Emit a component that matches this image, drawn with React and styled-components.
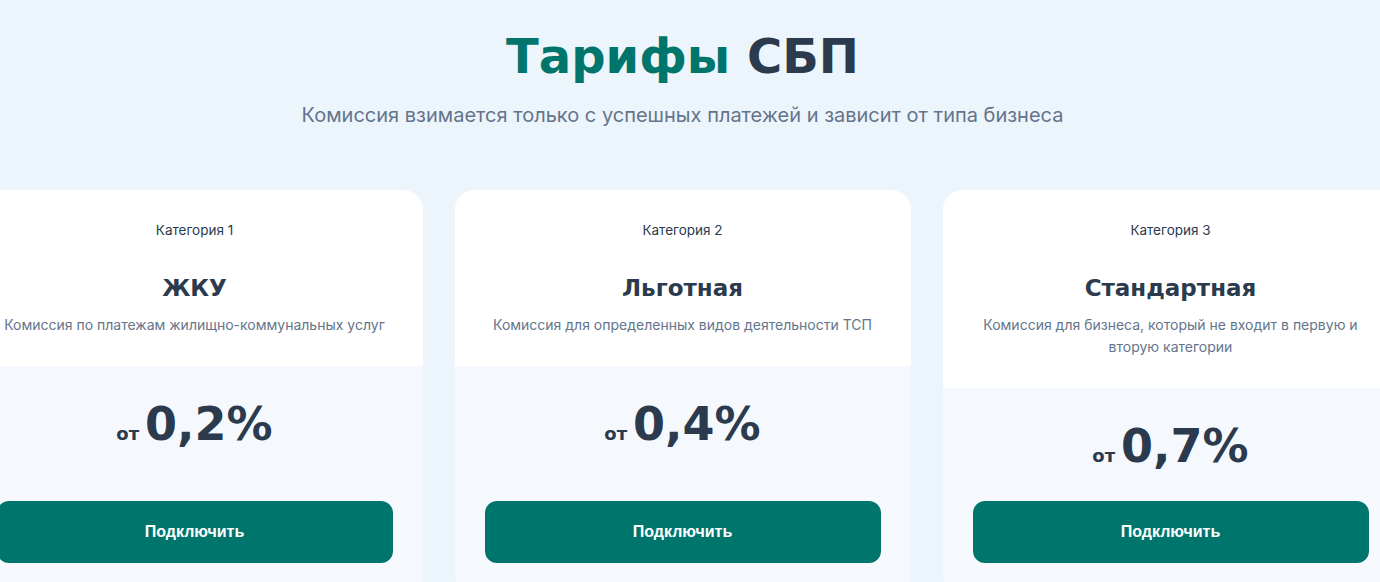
import React from 'react'
import styled, {createGlobalStyle} from 'styled-components'

const GlobalStyle = createGlobalStyle`
  html, body {
    margin: 0;
    padding: 0;
    background: #edf5fc;
    overflow: hidden;
  }
  * { box-sizing: border-box; }
`;

const Section = styled.section`
  width: 1365px;
  padding-top: 28px;
  display: flex;
  flex-direction: column;
  align-items: center;
`;

const Title = styled.h1`
  margin: 0;
  font-family: "DejaVu Sans", "Liberation Sans", sans-serif;
  font-weight: 700;
  font-size: 48px;
  line-height: 1.2;
  color: #2b3a4d;
  span { color: #00756c; }
`;

const Subtitle = styled.p`
  margin: 15px 0 0;
  font-family: Inter, "Noto Sans", sans-serif;
  font-size: 20px;
  line-height: 28px;
  color: #64748b;
`;

const Cards = styled.div`
  margin-top: 61px;
  width: 100%;
  display: flex;
  justify-content: center;
  gap: 32px;
`;

const Card = styled.div`
  flex: 0 0 456px;
  display: flex;
  flex-direction: column;
  border-radius: 20px;
  overflow: hidden;
  background: #f5f9fd;
`;

const CardTop = styled.div`
  background: #ffffff;
  padding: 30px;
  text-align: center;
`;

const Label = styled.div`
  font-family: Inter, "Noto Sans", sans-serif;
  font-size: 13.5px;
  line-height: 20px;
  color: #2b3a4d;
`;

const Name = styled.h3`
  margin: 33px 0 0;
  font-family: "DejaVu Sans", "Liberation Sans", sans-serif;
  font-weight: 700;
  font-size: 23px;
  line-height: 30px;
  color: #2b3a4d;
`;

const Desc = styled.p`
  margin: 11px 0 0;
  font-family: Inter, "Noto Sans", sans-serif;
  font-size: 14px;
  line-height: 22px;
  color: #64748b;
`;

const CardBottom = styled.div`
  flex: 1;
  display: flex;
  flex-direction: column;
  padding: 30px;
`;

const Price = styled.div`
  display: flex;
  justify-content: center;
  align-items: baseline;
  gap: 6px;
  margin-bottom: 26px;
  font-family: "DejaVu Sans", "Liberation Sans", sans-serif;
  font-weight: 700;
  color: #2b3a4d;
`;

const From = styled.span`
  font-size: 18px;
`;

const Value = styled.span`
  font-size: 46px;
  line-height: 57.6px;
`;

const Button = styled.button`
  margin-top: auto;
  width: 100%;
  height: 62px;
  border: none;
  border-radius: 12px;
  background: #00756c;
  color: #ffffff;
  font-family: "Liberation Sans", Arial, sans-serif;
  font-weight: 700;
  font-size: 16px;
  cursor: pointer;
`;

const tariffs = [
  {cat: 'Категория 1', name: 'ЖКУ', desc: 'Комиссия по платежам жилищно-коммунальных услуг', value: '0,2%'},
  {cat: 'Категория 2', name: 'Льготная', desc: 'Комиссия для определенных видов деятельности ТСП', value: '0,4%'},
  {cat: 'Категория 3', name: 'Стандартная', desc: 'Комиссия для бизнеса, который не входит в первую и вторую категории', value: '0,7%'},
];

const App = () => {
  return (
    <>
      <GlobalStyle/>
      <Section>
        <Title><span>Тарифы</span> СБП</Title>
        <Subtitle>Комиссия взимается только с успешных платежей и зависит от типа бизнеса</Subtitle>
        <Cards>
          {tariffs.map((t) => (
            <Card key={t.cat}>
              <CardTop>
                <Label>{t.cat}</Label>
                <Name>{t.name}</Name>
                <Desc>{t.desc}</Desc>
              </CardTop>
              <CardBottom>
                <Price>
                  <From>от</From>
                  <Value>{t.value}</Value>
                </Price>
                <Button>Подключить</Button>
              </CardBottom>
            </Card>
          ))}
        </Cards>
      </Section>
    </>
  )
}

export default App
